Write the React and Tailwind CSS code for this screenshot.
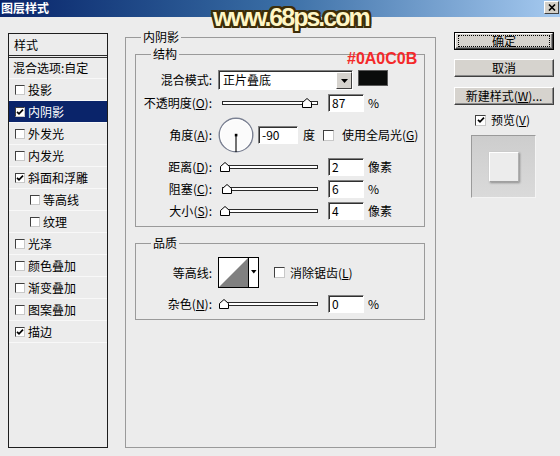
import React from 'react';

const font = "font-['Noto_Sans_CJK_SC','Noto_Sans',sans-serif]";

const styleItems = [
  { label: '混合选项:自定', plain: true },
  { label: '投影' },
  { label: '内阴影', checked: true, selected: true },
  { label: '外发光' },
  { label: '内发光' },
  { label: '斜面和浮雕', checked: true },
  { label: '等高线', indent: true },
  { label: '纹理', indent: true },
  { label: '光泽' },
  { label: '颜色叠加' },
  { label: '渐变叠加' },
  { label: '图案叠加' },
  { label: '描边', checked: true },
];

const sliderRows = [
  { label: '距离', key: 'D', pos: -2, value: '2', unit: '像素' },
  { label: '阻塞', key: 'C', pos: 0, value: '6', unit: '%' },
  { label: '大小', key: 'S', pos: -2, value: '4', unit: '像素' },
];

const Tick = ({ checked, big }) => (
  <span
    className={`${big ? 'w-[11px] h-[11px]' : 'w-[10px] h-[10px]'} shrink-0 bg-white border border-t-[#404040] border-l-[#404040] border-r-[#c8c8c8] border-b-[#c8c8c8] flex items-center justify-center`}
  >
    {checked && (
      <svg width="8" height="8" viewBox="0 0 8 8">
        <path d="M1 3.8L3 5.8L7 1.6" fill="none" stroke="#000" strokeWidth="1.7" />
      </svg>
    )}
  </span>
);

const Label = ({ children }) => (
  <span className="w-[76px] shrink-0 text-right whitespace-nowrap">{children}</span>
);

const Field = ({ value, wide }) => (
  <div
    className={`${wide ? 'w-[40px]' : 'w-[36px]'} h-[18px] shrink-0 bg-white border border-t-[#808080] border-l-[#808080] border-r-white border-b-white shadow-[inset_1px_1px_0_#303030] pl-[3px] leading-[16px]`}
  >
    {value}
  </div>
);

const Slider = ({ pos }) => (
  <div className="relative ml-[10px] w-[96px] h-[10px] shrink-0">
    <div className="absolute left-0 right-0 top-[3px] h-[4px] border border-[#2a2a2a] bg-white" />
    <svg className="absolute top-0" style={{ left: `${pos}px` }} width="10" height="10" viewBox="0 0 10 10">
      <path d="M0.5 9.5V4.5L5 0.5L9.5 4.5V9.5Z" fill="#fff" stroke="#000" />
    </svg>
  </div>
);

const Button = ({ children, primary, className = '' }) => (
  <div className={`h-[18px] ${primary ? 'border border-black' : ''} ${className}`}>
    <div className="h-full bg-[#d6d3ce] border border-t-white border-l-white border-r-[#404040] border-b-[#404040] shadow-[inset_-1px_-1px_0_#8a8a8a] flex items-center justify-center leading-[14px]">
      {primary ? (
        <div className="w-[92px] h-[12px] border border-dotted border-black flex items-center justify-center leading-[12px]">
          {children}
        </div>
      ) : (
        children
      )}
    </div>
  </div>
);

const App = () => {
  return (
    <div className={`relative w-[560px] h-[456px] bg-[#ececec] text-black text-[12px] leading-[14px] overflow-hidden ${font}`}>
      {/* title bar */}
      <div className="h-[17px] flex items-start justify-between bg-linear-to-r from-[#0a246a] via-[#3a6ea5] to-[#a6caf0]">
        <span className="pl-[1px] text-white font-bold leading-[16px]">图层样式</span>
        <div className="mt-[1px] mr-[1px] w-[15px] h-[13px] bg-[#d4d0c8] border border-t-white border-l-white border-r-[#404040] border-b-[#404040] flex items-center justify-center">
          <svg width="8" height="7" viewBox="0 0 8 7">
            <path d="M1 0.5L7 6.5M7 0.5L1 6.5" stroke="#000" strokeWidth="1.6" />
          </svg>
        </div>
      </div>

      <div className="flex items-start pt-[16px]">
        {/* style list */}
        <div className="ml-[8px] w-[100px] h-[415px] shrink-0 border border-[#1e1e1e]">
          <div className="h-[24px] pl-[5px] flex items-center border-b-[3px] border-double border-b-[#2a2a2a]">样式</div>
          {styleItems.map((item) => (
            <div
              key={item.label}
              className={`${item.plain ? 'h-[21px]' : 'h-[22px]'} flex items-center border-b border-b-[#f8f8f8] whitespace-nowrap ${item.selected ? 'bg-[#0a246a] text-white' : ''} ${item.plain ? 'pl-[4px]' : item.indent ? 'pl-[21px]' : 'pl-[6px]'}`}
            >
              {!item.plain && <Tick checked={item.checked} />}
              <span className={item.plain ? '' : 'ml-[3px]'}>{item.label}</span>
            </div>
          ))}
        </div>

        {/* inner shadow group */}
        <fieldset className="ml-[17px] -mt-[3px] w-[311px] h-[418px] shrink-0 border border-[#9a9a9a]">
          <legend className="ml-[15px] px-[2px] leading-[14px]">内阴影</legend>

          <fieldset className="ml-[9px] mt-[3px] w-[290px] border border-[#9a9a9a] pt-[9px] pb-[4px]">
            <legend className="ml-[15px] px-[2px] leading-[14px]">结构</legend>

            <div className="flex items-center h-[20px]">
              <Label>混合模式:</Label>
              <div className="ml-[6px] w-[135px] h-[20px] shrink-0 flex bg-white border border-t-[#808080] border-l-[#808080] border-r-white border-b-white shadow-[inset_1px_1px_0_#303030]">
                <span className="flex-1 pl-[4px] leading-[18px]">正片叠底</span>
                <div className="w-[16px] h-[17px] mt-[1px] bg-[#d6d3ce] border border-t-white border-l-white border-r-[#404040] border-b-[#404040] flex items-center justify-center">
                  <svg width="7" height="4" viewBox="0 0 7 4">
                    <path d="M0 0H7L3.5 4Z" fill="#000" />
                  </svg>
                </div>
              </div>
              <div className="self-start ml-[5px] w-[30px] h-[16px] bg-[#0a0c0b] border border-[#5a5a5a]" />
            </div>

            <div className="flex items-center h-[22px] mt-[2px]">
              <Label>
                不透明度(<u>O</u>):
              </Label>
              <Slider pos={80} />
              <div className="ml-[10px]">
                <Field value="87" />
              </div>
              <span className="ml-[4px]">%</span>
            </div>

            <div className="flex items-center h-[36px] mt-[3px]">
              <Label>
                角度(<u>A</u>):
              </Label>
              <svg className="ml-[6px] shrink-0" width="36" height="36" viewBox="0 0 36 36">
                <circle cx="18" cy="18" r="16.8" fill="#fbfbfb" stroke="#7a8092" strokeWidth="1.4" />
                <circle cx="18" cy="18" r="15.6" fill="none" stroke="#ffffff" strokeWidth="0.8" />
                <rect x="16.8" y="16.8" width="2.6" height="2.6" fill="#000" />
                <path d="M18 18V35" stroke="#000" strokeWidth="1.1" />
              </svg>
              <div className="ml-[4px]">
                <Field value="-90" wide />
              </div>
              <span className="ml-[5px]">度</span>
              <span className="ml-[8px]">
                <Tick big />
              </span>
              <span className="ml-[8px] whitespace-nowrap">
                使用全局光(<u>G</u>)
              </span>
            </div>

            {sliderRows.map((row, i) => (
              <div key={row.key} className={`flex items-center h-[22px] ${i === 0 ? 'mt-[3px]' : ''}`}>
                <Label>
                  {row.label}(<u>{row.key}</u>):
                </Label>
                <Slider pos={row.pos} />
                <div className="ml-[10px]">
                  <Field value={row.value} />
                </div>
                <span className="ml-[4px]">{row.unit}</span>
              </div>
            ))}
          </fieldset>

          <fieldset className="ml-[9px] mt-[9px] w-[290px] border border-[#9a9a9a] pt-[7px] pb-[4px]">
            <legend className="ml-[15px] px-[2px] leading-[14px]">品质</legend>

            <div className="flex items-center h-[31px]">
              <Label>等高线:</Label>
              <svg className="ml-[6px] shrink-0" width="41" height="31" viewBox="0 0 41 31">
                <rect x="0.5" y="0.5" width="40" height="30" fill="#fff" stroke="#000" />
                <path d="M1 30L30 1V30Z" fill="#808080" />
                <path d="M30.5 0V31" stroke="#000" />
                <path d="M33 13H38.5L35.75 16.5Z" fill="#000" />
              </svg>
              <span className="ml-[15px]">
                <Tick big />
              </span>
              <span className="ml-[5px] whitespace-nowrap">
                消除锯齿(<u>L</u>)
              </span>
            </div>

            <div className="flex items-center h-[22px] mt-[5px]">
              <Label>
                杂色(<u>N</u>):
              </Label>
              <Slider pos={-3} />
              <div className="ml-[10px]">
                <Field value="0" />
              </div>
              <span className="ml-[4px]">%</span>
            </div>
          </fieldset>
        </fieldset>

        {/* buttons and preview */}
        <div className="ml-[18px] -mt-[1px] w-[100px] shrink-0">
          <Button primary>确定</Button>
          <Button className="mt-[9px]">取消</Button>
          <Button className="mt-[10px]">
            <span className="whitespace-nowrap">
              新建样式(<u>W</u>)...
            </span>
          </Button>
          <div className="mt-[8px] ml-[21px] h-[14px] flex items-center">
            <Tick checked big />
            <span className="ml-[5px]">
              预览(<u>V</u>)
            </span>
          </div>
          <div className="mt-[8px] ml-[17px] w-[65px] h-[63px] flex items-center justify-center bg-linear-to-b from-[#cdcdcd] to-[#dadada] border border-t-[#9a9a9a] border-l-[#9a9a9a] border-r-[#f4f4f4] border-b-[#f4f4f4]">
            <div className="w-[30px] h-[30px] bg-[#ececec] border border-t-white border-l-white border-r-[#b0b0b0] border-b-[#a0a0a0] shadow-[1px_1px_2px_rgba(0,0,0,0.35)]" />
          </div>
        </div>
      </div>

      {/* colour annotation */}
      <span className="absolute left-[347px] top-[51px] text-[16px] leading-[16px] font-bold text-[#f42a2a] font-['Liberation_Sans',sans-serif]">
        #0A0C0B
      </span>

      {/* watermark */}
      <span className="absolute left-[213px] top-[3px] z-10 pointer-events-none text-[25px] leading-[28px] font-bold tracking-[-2px] text-[#fff6c6] font-['Liberation_Sans',sans-serif] [text-shadow:2px_0_#3d2d08,-2px_0_#3d2d08,0_2px_#3d2d08,0_-2px_#3d2d08,2px_2px_#3d2d08,-2px_-2px_#3d2d08,2px_-2px_#3d2d08,-2px_2px_#3d2d08]">
        www.68ps.com
      </span>
    </div>
  );
};

export default App;
